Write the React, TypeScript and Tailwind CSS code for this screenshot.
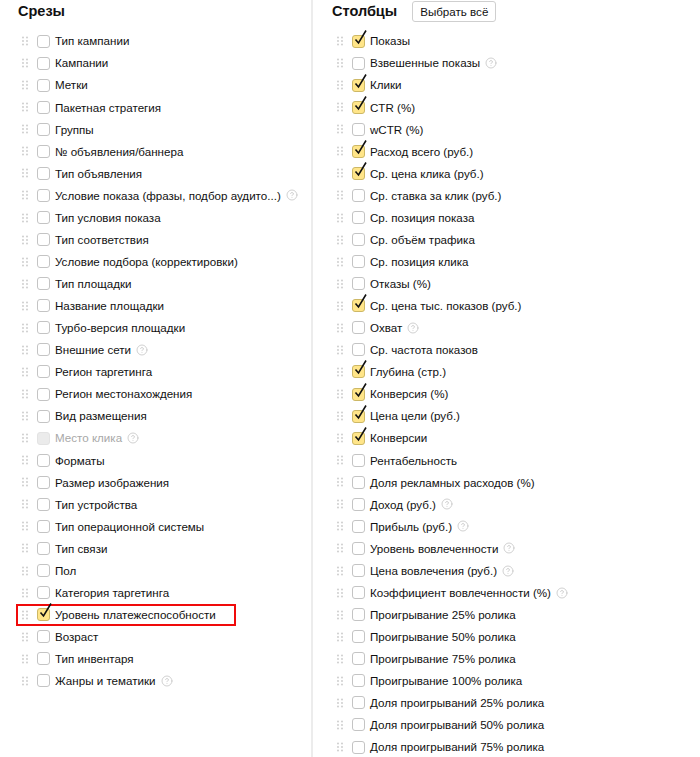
import { CircleHelp } from "lucide-react";

type Item = { label: string; checked?: boolean; hint?: boolean; disabled?: boolean; marked?: boolean };

const slices: Item[] = [
  { label: "Тип кампании" },
  { label: "Кампании" },
  { label: "Метки" },
  { label: "Пакетная стратегия" },
  { label: "Группы" },
  { label: "№ объявления/баннера" },
  { label: "Тип объявления" },
  { label: "Условие показа (фразы, подбор аудито...)", hint: true },
  { label: "Тип условия показа" },
  { label: "Тип соответствия" },
  { label: "Условие подбора (корректировки)" },
  { label: "Тип площадки" },
  { label: "Название площадки" },
  { label: "Турбо-версия площадки" },
  { label: "Внешние сети", hint: true },
  { label: "Регион таргетинга" },
  { label: "Регион местонахождения" },
  { label: "Вид размещения" },
  { label: "Место клика", hint: true, disabled: true },
  { label: "Форматы" },
  { label: "Размер изображения" },
  { label: "Тип устройства" },
  { label: "Тип операционной системы" },
  { label: "Тип связи" },
  { label: "Пол" },
  { label: "Категория таргетинга" },
  { label: "Уровень платежеспособности", checked: true, marked: true },
  { label: "Возраст" },
  { label: "Тип инвентаря" },
  { label: "Жанры и тематики", hint: true },
];

const columns: Item[] = [
  { label: "Показы", checked: true },
  { label: "Взвешенные показы", hint: true },
  { label: "Клики", checked: true },
  { label: "CTR (%)", checked: true },
  { label: "wCTR (%)" },
  { label: "Расход всего (руб.)", checked: true },
  { label: "Ср. цена клика (руб.)", checked: true },
  { label: "Ср. ставка за клик (руб.)" },
  { label: "Ср. позиция показа" },
  { label: "Ср. объём трафика" },
  { label: "Ср. позиция клика" },
  { label: "Отказы (%)" },
  { label: "Ср. цена тыс. показов (руб.)", checked: true },
  { label: "Охват", hint: true },
  { label: "Ср. частота показов" },
  { label: "Глубина (стр.)", checked: true },
  { label: "Конверсия (%)", checked: true },
  { label: "Цена цели (руб.)", checked: true },
  { label: "Конверсии", checked: true },
  { label: "Рентабельность" },
  { label: "Доля рекламных расходов (%)" },
  { label: "Доход (руб.)", hint: true },
  { label: "Прибыль (руб.)", hint: true },
  { label: "Уровень вовлеченности", hint: true },
  { label: "Цена вовлечения (руб.)", hint: true },
  { label: "Коэффициент вовлеченности (%)", hint: true },
  { label: "Проигрывание 25% ролика" },
  { label: "Проигрывание 50% ролика" },
  { label: "Проигрывание 75% ролика" },
  { label: "Проигрывание 100% ролика" },
  { label: "Доля проигрываний 25% ролика" },
  { label: "Доля проигрываний 50% ролика" },
  { label: "Доля проигрываний 75% ролика" },
];

const Handle = () => (
  <svg width="6" height="10" viewBox="0 0 6 10" className="shrink-0">
    {[1, 5].map((x) =>
      [1.5, 5, 8.5].map((y) => <circle key={`${x}-${y}`} cx={x} cy={y} r="0.9" fill="#c9c9c9" />)
    )}
  </svg>
);

const Box = ({ checked, disabled }: { checked?: boolean; disabled?: boolean }) => (
  <span className="relative block shrink-0 w-[13px] h-[13px]">
    <span
      className={
        "block w-[13px] h-[13px] rounded-[3px] border " +
        (checked
          ? "bg-[#ffe589] border-[#cdb866]"
          : disabled
          ? "bg-[#ebebeb] border-[#e3e3e3]"
          : "bg-white border-[#c4c4c4]")
      }
    />
    {checked && (
      <svg width="16" height="17" viewBox="0 0 16 17" className="absolute left-[1px] top-[-6px]">
        <path d="M2.5 10.5 L5.5 14 L13 1.5" fill="none" stroke="#111" strokeWidth="1.6" />
      </svg>
    )}
  </span>
);

const Row = ({ item }: { item: Item }) => (
  <div className="relative flex items-center h-[22.07px]">
    {item.marked && (
      <span className="absolute left-[-6px] w-[220px] top-0 bottom-0 border-2 border-[#f00a0a]" />
    )}
    <Handle />
    <span className="ml-[9px]">
      <Box checked={item.checked} disabled={item.disabled} />
    </span>
    <span className={"ml-[5px] whitespace-nowrap " + (item.disabled ? "text-[#a8a8a8]" : "text-[#111]")}>
      {item.label}
    </span>
    {item.hint && <CircleHelp size={12} strokeWidth={1.4} className="ml-[5px] text-[#bdbdbd] shrink-0" />}
  </div>
);

export default function App() {
  return (
    <div
      className="flex w-[700px] h-[757px] bg-white text-[11.6px] overflow-hidden"
      style={{ fontFamily: '"Liberation Sans", Arial, sans-serif' }}
    >
      <section className="w-[311px] shrink-0">
        <div className="h-[30px] flex items-center pl-[18px] pb-[7px]">
          <h2 className="text-[14.5px] font-bold text-[#111]">Срезы</h2>
        </div>
        <div className="pl-[22px]">
          {slices.map((it) => (
            <Row key={it.label} item={it} />
          ))}
        </div>
      </section>
      <div className="w-[2px] bg-[#ececec] shrink-0" />
      <section className="flex-1">
        <div className="h-[30px] flex items-center pl-[19px] pb-[7px] gap-[15px]">
          <h2 className="text-[14.5px] font-bold text-[#111]">Столбцы</h2>
          <button className="h-[21px] px-[7px] border border-[#cfcfcf] rounded-[3px] text-[11.6px] text-[#111] bg-white">
            Выбрать всё
          </button>
        </div>
        <div className="pl-[24px]">
          {columns.map((it) => (
            <Row key={it.label} item={it} />
          ))}
        </div>
      </section>
    </div>
  );
}
